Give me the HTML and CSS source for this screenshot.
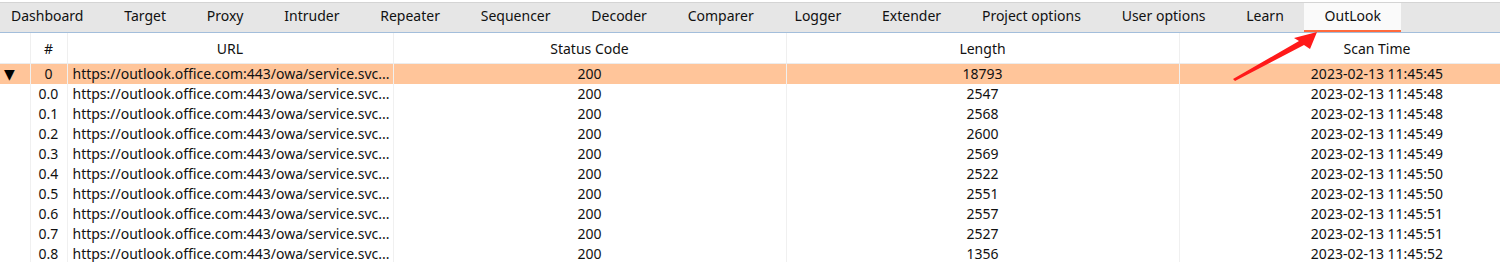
FILE: index.html
```html
<!DOCTYPE html>
<html>

<head>
  <title>OutLook</title>
  <meta charset="utf-8" name="viewport" content="width=device-width, initial-scale=1" />
  <link rel="stylesheet" href="styles.css">
</head>

<body>

<div class="tabs">
  <div class="tab">Dashboard</div>
  <div class="tab">Target</div>
  <div class="tab">Proxy</div>
  <div class="tab">Intruder</div>
  <div class="tab">Repeater</div>
  <div class="tab">Sequencer</div>
  <div class="tab">Decoder</div>
  <div class="tab">Comparer</div>
  <div class="tab">Logger</div>
  <div class="tab">Extender</div>
  <div class="tab">Project options</div>
  <div class="tab">User options</div>
  <div class="tab">Learn</div>
  <div class="tab tab--active">OutLook</div>
</div>

<div class="panel">
  <table class="grid">
    <colgroup>
      <col class="c-tree">
      <col class="c-num">
      <col class="c-url">
      <col class="c-status">
      <col class="c-len">
      <col class="c-time">
    </colgroup>
    <tr>
      <th></th>
      <th>#</th>
      <th>URL</th>
      <th>Status Code</th>
      <th>Length</th>
      <th>Scan Time</th>
    </tr>
    <tr class="selected">
      <td class="tree">&#9660;</td>
      <td class="num">0</td>
      <td class="url">https://outlook.office.com:443/owa/service.svc...</td>
      <td>200</td>
      <td>18793</td>
      <td>2023-02-13 11:45:45</td>
    </tr>
    <tr>
      <td></td><td class="num">0.0</td>
      <td class="url">https://outlook.office.com:443/owa/service.svc...</td>
      <td>200</td><td>2547</td><td>2023-02-13 11:45:48</td>
    </tr>
    <tr>
      <td></td><td class="num">0.1</td>
      <td class="url">https://outlook.office.com:443/owa/service.svc...</td>
      <td>200</td><td>2568</td><td>2023-02-13 11:45:48</td>
    </tr>
    <tr>
      <td></td><td class="num">0.2</td>
      <td class="url">https://outlook.office.com:443/owa/service.svc...</td>
      <td>200</td><td>2600</td><td>2023-02-13 11:45:49</td>
    </tr>
    <tr>
      <td></td><td class="num">0.3</td>
      <td class="url">https://outlook.office.com:443/owa/service.svc...</td>
      <td>200</td><td>2569</td><td>2023-02-13 11:45:49</td>
    </tr>
    <tr>
      <td></td><td class="num">0.4</td>
      <td class="url">https://outlook.office.com:443/owa/service.svc...</td>
      <td>200</td><td>2522</td><td>2023-02-13 11:45:50</td>
    </tr>
    <tr>
      <td></td><td class="num">0.5</td>
      <td class="url">https://outlook.office.com:443/owa/service.svc...</td>
      <td>200</td><td>2551</td><td>2023-02-13 11:45:50</td>
    </tr>
    <tr>
      <td></td><td class="num">0.6</td>
      <td class="url">https://outlook.office.com:443/owa/service.svc...</td>
      <td>200</td><td>2557</td><td>2023-02-13 11:45:51</td>
    </tr>
    <tr>
      <td></td><td class="num">0.7</td>
      <td class="url">https://outlook.office.com:443/owa/service.svc...</td>
      <td>200</td><td>2527</td><td>2023-02-13 11:45:51</td>
    </tr>
    <tr>
      <td></td><td class="num">0.8</td>
      <td class="url">https://outlook.office.com:443/owa/service.svc...</td>
      <td>200</td><td>1356</td><td>2023-02-13 11:45:52</td>
    </tr>
  </table>
</div>

<!-- annotation arrow pointing at the OutLook tab -->
<svg class="pointer" width="1500" height="262" viewBox="0 0 1500 262">
  <polygon fill="#ff1a1a" points="1317,32 1310,49 1304,45 1235,81 1233,79 1299,41 1294,38" />
</svg>

</body>

</html>
```

FILE: styles.css
```css
html, body {
  margin: 0;
  padding: 0;
  background: #fff;
  overflow: hidden;
}

body {
  font-family: "Noto Sans", "Open Sans", sans-serif;
  font-size: 14px;
  color: #111;
  width: 1500px;
  height: 262px;
  position: relative;
}

/* tab strip */
.tabs {
  display: flex;
  margin-top: 2px;
  height: 29px;
  background: #e6e6e6;
  border-top: 1px solid #d4d4d4;
  border-bottom: 1px solid #a3bedb;
}

.tab {
  padding: 0 20.4px;
  line-height: 26px;
  white-space: nowrap;
  color: #111;
}

.tab:first-child {
  padding-left: 11px;
}

.tab--active {
  background: #fafafa;
  border-bottom: 2px solid #ff6a3d;
  padding-bottom: 1px;
}

/* results grid */
.panel {
  overflow: hidden;
  width: 1500px;
}

.grid {
  border-collapse: collapse;
  table-layout: fixed;
  width: 1575px;
}

.c-tree { width: 30px; }
.c-num { width: 37px; }
.c-url { width: 326px; }
.c-status { width: 393px; }
.c-len { width: 393px; }
.c-time { width: 396px; }

.grid th {
  height: 30px;
  font-weight: normal;
  text-align: center;
  border-right: 1px solid #efefef;
  border-bottom: 1px solid #ececec;
  padding: 0;
}

.grid td {
  height: 20px;
  padding: 0;
  line-height: 20px;
  text-align: center;
  border-right: 1px solid #f0f0f0;
  white-space: nowrap;
  overflow: hidden;
}

.grid td.url {
  text-align: left;
  padding-left: 5px;
}

.grid td.tree {
  text-align: left;
  padding-left: 4px;
  font-family: "DejaVu Sans", sans-serif;
  font-size: 14px;
  color: #000;
}

.selected td {
  background: #ffc59a;
}

.pointer {
  position: absolute;
  left: 0;
  top: 0;
  pointer-events: none;
}
```
